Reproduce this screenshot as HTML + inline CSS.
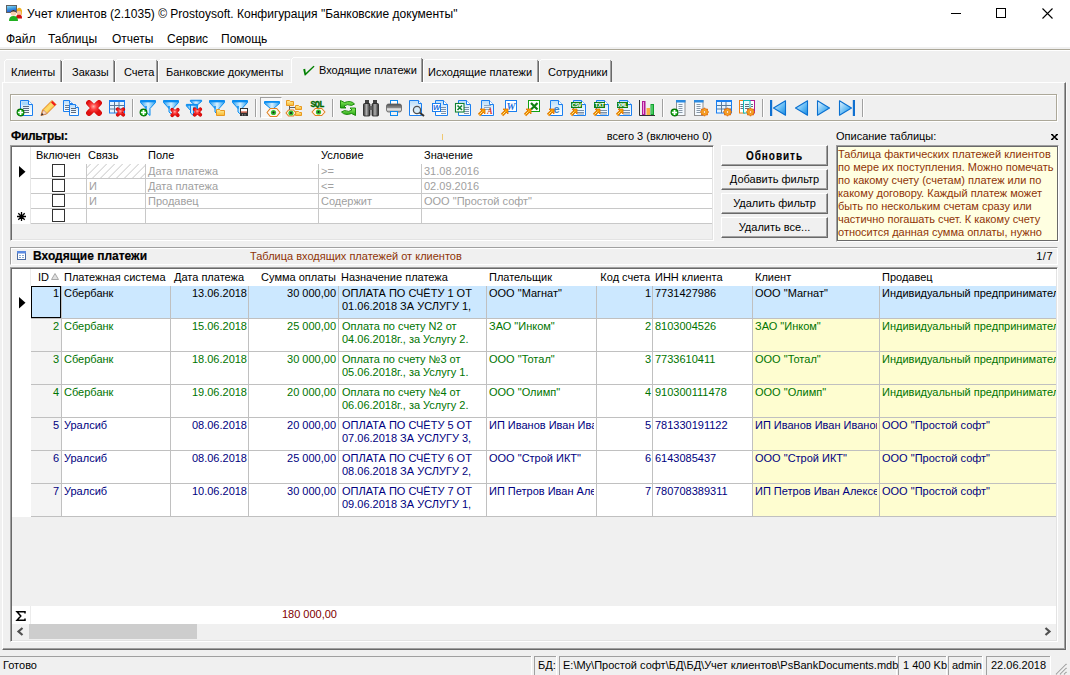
<!DOCTYPE html><html><head><meta charset="utf-8"><title>Учет клиентов</title><style>
*{margin:0;padding:0;box-sizing:border-box}
html,body{width:1070px;height:675px;overflow:hidden;background:#f0f0f0;position:relative;font-family:"Liberation Sans",sans-serif;font-size:11px;color:#000}
.t{position:absolute;white-space:nowrap;line-height:14px}
svg{position:absolute;overflow:visible}
.g{color:#a0a0a0}
.c{position:absolute;white-space:nowrap;line-height:13px;overflow:hidden}
</style></head><body>
<div style="position:absolute;left:0px;top:0px;width:1070px;height:47px;background:#fff"></div>
<div class="t" style="left:27px;top:4px;font-size:12px;line-height:20px">Учет клиентов (2.1035) © Prostoysoft. Конфигурация "Банковские документы"</div>
<svg style="left:6px;top:5px" width="17" height="17" viewBox="0 0 17 17">
<defs><linearGradient id="gScr" x1="0" y1="0" x2="0.3" y2="1"><stop offset="0" stop-color="#a0e0f8"/><stop offset="0.5" stop-color="#40a0e0"/><stop offset="1" stop-color="#2050d0"/></linearGradient></defs>
<rect x="0.5" y="0.5" width="10" height="7" fill="url(#gScr)" stroke="#606060"/>
<path d="M11 4Q13 2 15 3.5Q16.5 5 16 8L15.5 10H11Z" fill="#f0b020"/>
<circle cx="13" cy="8" r="2.3" fill="#f8c0a0"/>
<path d="M10 13Q10 9.5 13 9.8Q16 9.5 16 13V13.5H10Z" fill="#d01010"/>
<circle cx="7.5" cy="8" r="2.8" fill="#f8d0b0"/><path d="M4.6 7.5Q5 5 7.5 5Q10 5 10.4 7.5Q9 6.3 7.5 6.5Q6 6.3 4.6 7.5Z" fill="#202020"/>
<path d="M3 16Q3 11 7.5 11Q12 11 12 16Z" fill="#20b020"/>
</svg>
<div style="position:absolute;left:951px;top:13px;width:10px;height:1px;background:#000"></div>
<div style="position:absolute;left:996px;top:8px;width:10px;height:10px;border:1px solid #000"></div>
<svg style="left:1042px;top:8px" width="11" height="11" viewBox="0 0 11 11"><path d="M0.5 0.5L10.5 10.5M10.5 0.5L0.5 10.5" stroke="#000" stroke-width="1.1"/></svg>
<div class="t" style="left:6px;top:29px;font-size:12px;line-height:20px">Файл</div>
<div class="t" style="left:48px;top:29px;font-size:12px;line-height:20px">Таблицы</div>
<div class="t" style="left:112px;top:29px;font-size:12px;line-height:20px">Отчеты</div>
<div class="t" style="left:167px;top:29px;font-size:12px;line-height:20px">Сервис</div>
<div class="t" style="left:221px;top:29px;font-size:12px;line-height:20px">Помощь</div>
<div style="position:absolute;left:0px;top:49px;width:1070px;height:1px;background:#aca899"></div>
<div style="position:absolute;left:0px;top:50px;width:1070px;height:1px;background:#fff"></div>
<div style="position:absolute;left:6px;top:59px;width:54px;height:1px;background:#fff"></div>
<div style="position:absolute;left:4px;top:61px;width:1px;height:21px;background:#fff"></div>
<div style="position:absolute;left:5px;top:60px;width:1px;height:1px;background:#fff"></div>
<div style="position:absolute;left:60px;top:60px;width:1px;height:22px;background:#a0a0a0"></div>
<div style="position:absolute;left:61px;top:61px;width:1px;height:21px;background:#696969"></div>
<div style="position:absolute;left:64px;top:59px;width:49px;height:1px;background:#fff"></div>
<div style="position:absolute;left:62px;top:61px;width:1px;height:21px;background:#fff"></div>
<div style="position:absolute;left:63px;top:60px;width:1px;height:1px;background:#fff"></div>
<div style="position:absolute;left:113px;top:60px;width:1px;height:22px;background:#a0a0a0"></div>
<div style="position:absolute;left:114px;top:61px;width:1px;height:21px;background:#696969"></div>
<div style="position:absolute;left:117px;top:59px;width:39px;height:1px;background:#fff"></div>
<div style="position:absolute;left:115px;top:61px;width:1px;height:21px;background:#fff"></div>
<div style="position:absolute;left:116px;top:60px;width:1px;height:1px;background:#fff"></div>
<div style="position:absolute;left:156px;top:60px;width:1px;height:22px;background:#a0a0a0"></div>
<div style="position:absolute;left:157px;top:61px;width:1px;height:21px;background:#696969"></div>
<div style="position:absolute;left:160px;top:59px;width:130px;height:1px;background:#fff"></div>
<div style="position:absolute;left:158px;top:61px;width:1px;height:21px;background:#fff"></div>
<div style="position:absolute;left:159px;top:60px;width:1px;height:1px;background:#fff"></div>
<div style="position:absolute;left:425px;top:59px;width:112px;height:1px;background:#fff"></div>
<div style="position:absolute;left:423px;top:61px;width:1px;height:21px;background:#fff"></div>
<div style="position:absolute;left:424px;top:60px;width:1px;height:1px;background:#fff"></div>
<div style="position:absolute;left:537px;top:60px;width:1px;height:22px;background:#a0a0a0"></div>
<div style="position:absolute;left:538px;top:61px;width:1px;height:21px;background:#696969"></div>
<div style="position:absolute;left:541px;top:59px;width:69px;height:1px;background:#fff"></div>
<div style="position:absolute;left:539px;top:61px;width:1px;height:21px;background:#fff"></div>
<div style="position:absolute;left:540px;top:60px;width:1px;height:1px;background:#fff"></div>
<div style="position:absolute;left:610px;top:60px;width:1px;height:22px;background:#a0a0a0"></div>
<div style="position:absolute;left:611px;top:61px;width:1px;height:21px;background:#696969"></div>
<div class="t" style="left:11px;top:65px;">Клиенты</div>
<div class="t" style="left:72px;top:65px;">Заказы</div>
<div class="t" style="left:124px;top:65px;">Счета</div>
<div class="t" style="left:166px;top:65px;">Банковские документы</div>
<div style="position:absolute;left:291px;top:58px;width:131px;height:25px;background:#f0f0f0"></div>
<div style="position:absolute;left:293px;top:57px;width:128px;height:1px;background:#fff"></div>
<div style="position:absolute;left:291px;top:59px;width:1px;height:23px;background:#fff"></div>
<div style="position:absolute;left:292px;top:58px;width:1px;height:1px;background:#fff"></div>
<div style="position:absolute;left:421px;top:58px;width:1px;height:24px;background:#a0a0a0"></div>
<div style="position:absolute;left:422px;top:59px;width:1px;height:23px;background:#696969"></div>
<svg style="left:302px;top:65px" width="14" height="12" viewBox="0 0 14 12"><path d="M1.2 4.2L3.2 3.8L3.8 8L11.5 0.8L12.6 1.6L3.4 10.6L2.6 10.6Z" fill="#008000"/></svg>
<div class="t" style="left:319px;top:63px;">Входящие платежи</div>
<div class="t" style="left:428px;top:65px;">Исходящие платежи</div>
<div class="t" style="left:548px;top:65px;">Сотрудники</div>
<div style="position:absolute;left:2px;top:82px;width:1064px;height:568px;border-top:1px solid #fff;border-left:1px solid #fff;border-right:1px solid #696969;border-bottom:1px solid #696969;box-shadow:inset -1px -1px 0 #a0a0a0"></div>
<div style="position:absolute;left:1066px;top:82px;width:1px;height:568px;background:#fafafa"></div>
<div style="position:absolute;left:292px;top:82px;width:129px;height:1px;background:#f0f0f0"></div>
<div style="position:absolute;left:10px;top:94px;width:1047px;height:27px;border-top:1px solid #aca899;border-left:1px solid #aca899;border-right:1px solid #aca899;border-bottom:1px solid #aca899;box-shadow:1px 1px 0 #fff, inset 1px 1px 0 #fff"></div>
<div style="position:absolute;left:132px;top:99px;width:1px;height:18px;background:#a0a0a0;box-shadow:1px 0 0 #fff"></div>
<div style="position:absolute;left:255px;top:99px;width:1px;height:18px;background:#a0a0a0;box-shadow:1px 0 0 #fff"></div>
<div style="position:absolute;left:332px;top:99px;width:1px;height:18px;background:#a0a0a0;box-shadow:1px 0 0 #fff"></div>
<div style="position:absolute;left:662px;top:99px;width:1px;height:18px;background:#a0a0a0;box-shadow:1px 0 0 #fff"></div>
<div style="position:absolute;left:762px;top:99px;width:1px;height:18px;background:#a0a0a0;box-shadow:1px 0 0 #fff"></div>
<div style="position:absolute;left:862px;top:99px;width:1px;height:18px;background:#a0a0a0;box-shadow:1px 0 0 #fff"></div>
<div style="position:absolute;left:260px;top:97px;width:22px;height:21px;border-top:1px solid #a0a0a0;border-left:1px solid #a0a0a0;border-right:1px solid #fff;border-bottom:1px solid #fff;background:#f7f7f7"></div>
<svg width="0" height="0" style="position:absolute"><defs>
<linearGradient id="gDoc" x1="0" y1="0" x2="0" y2="1"><stop offset="0" stop-color="#b8dcf8"/><stop offset="0.5" stop-color="#e4f2fd"/><stop offset="1" stop-color="#ffffff"/></linearGradient>
<linearGradient id="gFun" x1="0" y1="0" x2="1" y2="0"><stop offset="0" stop-color="#2aa0f0"/><stop offset="0.5" stop-color="#d8f0ff"/><stop offset="1" stop-color="#2aa0f0"/></linearGradient>
<radialGradient id="gRed" cx="0.45" cy="0.35" r="0.7"><stop offset="0" stop-color="#ffb0a8"/><stop offset="0.45" stop-color="#ff4040"/><stop offset="1" stop-color="#e01010"/></radialGradient>
<linearGradient id="gPen" x1="0" y1="0" x2="1" y2="1"><stop offset="0" stop-color="#f08800"/><stop offset="0.5" stop-color="#ffe070"/><stop offset="1" stop-color="#e07800"/></linearGradient>
<linearGradient id="gFold" x1="0" y1="0" x2="0" y2="1"><stop offset="0" stop-color="#fff0a0"/><stop offset="1" stop-color="#f8b830"/></linearGradient>
<linearGradient id="gGreen" x1="0" y1="0" x2="0" y2="1"><stop offset="0" stop-color="#8ef060"/><stop offset="1" stop-color="#20a010"/></linearGradient>
<linearGradient id="gNav" x1="0" y1="0" x2="1" y2="1"><stop offset="0" stop-color="#e8f6ff"/><stop offset="0.6" stop-color="#5cb8f4"/><stop offset="1" stop-color="#1888e0"/></linearGradient>
<linearGradient id="gBin" x1="0" y1="0" x2="1" y2="0"><stop offset="0" stop-color="#303030"/><stop offset="0.45" stop-color="#b0b0b0"/><stop offset="1" stop-color="#282828"/></linearGradient>
<linearGradient id="gPr" x1="0" y1="0" x2="0" y2="1"><stop offset="0" stop-color="#505050"/><stop offset="0.5" stop-color="#909090"/><stop offset="0.6" stop-color="#f0f0f0"/><stop offset="1" stop-color="#a0a0a0"/></linearGradient>
</defs></svg>
<svg style="left:17px;top:100px" width="16" height="16" viewBox="0 0 16 16"><path d="M3.5 0.5H11.5L15.5 4.5V15.5H3.5Z" fill="url(#gDoc)" stroke="#1a7ff0"/><path d="M11.5 0.5V4.5H15.5" fill="#fff" stroke="#1a7ff0"/><rect x="5" y="2" width="6" height="3" fill="#a8d8fa"/><path d="M6 6.5H12" stroke="#5a6a80" stroke-width="1"/><path d="M6 8.5H12" stroke="#5a6a80" stroke-width="1"/><path d="M6 10.5H12" stroke="#5a6a80" stroke-width="1"/><path d="M6 12.5H12" stroke="#5a6a80" stroke-width="1"/><circle cx="3.5" cy="12.5" r="3.4" fill="#18b818" stroke="#007000" stroke-width="1.1"/><path d="M0.8999999999999999 12.5H6.1M3.5 9.9V15.1" stroke="#fff" stroke-width="1.7"/></svg>
<svg style="left:40px;top:100px" width="16" height="16" viewBox="0 0 16 16"><path d="M1 15.5L2.5 10L12 0.5L16 4.5L6.5 14Z" fill="url(#gPen)" stroke="#e07000" stroke-width="0.8"/><path d="M12.5 1L16 4.5L14.5 6L11 2.5Z" fill="#f01818"/><path d="M1 15.5L3.5 10L7 13.5Z" fill="#f8d8c8" stroke="#b07060" stroke-width="0.6"/><path d="M1 15.5L2 13L3.5 14.5Z" fill="#222"/></svg>
<svg style="left:63px;top:100px" width="16" height="16" viewBox="0 0 16 16"><path d="M0.5 0.5H6.5L9.5 3.5V11.5H0.5Z" fill="url(#gDoc)" stroke="#1a7ff0"/><path d="M6.5 0.5V3.5H9.5" fill="#fff" stroke="#1a7ff0"/><path d="M2 5.5H6" stroke="#6a7a90" stroke-width="1"/><path d="M2 7.5H6" stroke="#6a7a90" stroke-width="1"/><path d="M2 9.5H6" stroke="#6a7a90" stroke-width="1"/><path d="M6.5 4.5H12.5L15.5 7.5V15.5H6.5Z" fill="url(#gDoc)" stroke="#1a7ff0"/><path d="M12.5 4.5V7.5H15.5" fill="#fff" stroke="#1a7ff0"/><path d="M8 8.5H13" stroke="#5a6a80" stroke-width="1"/><path d="M8 10.5H13" stroke="#5a6a80" stroke-width="1"/><path d="M8 12.5H13" stroke="#5a6a80" stroke-width="1"/></svg>
<svg style="left:86px;top:100px" width="16" height="16" viewBox="0 0 16 16"><path d="M3 3L13 13M13 3L3 13" stroke="#d00000" stroke-width="5.75" stroke-linecap="round"/><path d="M3 3L13 13M13 3L3 13" stroke="url(#gRed)" stroke-width="4.75" stroke-linecap="round"/></svg>
<svg style="left:109px;top:100px" width="16" height="16" viewBox="0 0 16 16"><rect x="0.5" y="0.5" width="15" height="12.5" fill="#e6f4ff" stroke="#1a7ff0"/><rect x="0" y="0" width="16" height="2" fill="#1a7ff0"/><path d="M1 5.5H15M1 9H15M5.5 2V13M10 2V13" stroke="#5a7a9a" stroke-width="1"/><path d="M8.7 9.2L14.3 14.8M14.3 9.2L8.7 14.8" stroke="#d00000" stroke-width="3.6599999999999997" stroke-linecap="round"/><path d="M8.7 9.2L14.3 14.8M14.3 9.2L8.7 14.8" stroke="url(#gRed)" stroke-width="2.6599999999999997" stroke-linecap="round"/></svg>
<svg style="left:140px;top:100px" width="16" height="16" viewBox="0 0 16 16"><path d="M0.50 0.50H15.50V2.50L10.00 8.50V10.00 15.50L6.00 12.00V6.00 8.50L0.50 2.50Z" fill="url(#gFun)" stroke="#0a8cf0" stroke-width="1"/><path d="M1.00 1.50H15.00" stroke="#0a8cf0" stroke-width="1.60"/><circle cx="3.5" cy="12.5" r="3.4" fill="#18b818" stroke="#007000" stroke-width="1.1"/><path d="M0.8999999999999999 12.5H6.1M3.5 9.9V15.1" stroke="#fff" stroke-width="1.7"/></svg>
<svg style="left:163px;top:100px" width="16" height="16" viewBox="0 0 16 16"><path d="M0.50 0.50H15.50V2.50L10.00 8.50V10.00 15.50L6.00 12.00V6.00 8.50L0.50 2.50Z" fill="url(#gFun)" stroke="#0a8cf0" stroke-width="1"/><path d="M1.00 1.50H15.00" stroke="#0a8cf0" stroke-width="1.60"/><path d="M9.2 9.7L14.8 15.3M14.8 9.7L9.2 15.3" stroke="#d00000" stroke-width="3.6599999999999997" stroke-linecap="round"/><path d="M9.2 9.7L14.8 15.3M14.8 9.7L9.2 15.3" stroke="url(#gRed)" stroke-width="2.6599999999999997" stroke-linecap="round"/></svg>
<svg style="left:186px;top:100px" width="16" height="16" viewBox="0 0 16 16"><path d="M4.38 0.28H15.62V1.41L11.50 4.78V11.50 8.72L8.50 6.75V8.50 4.78L4.38 1.41Z" fill="url(#gFun)" stroke="#0a8cf0" stroke-width="1"/><path d="M4.75 0.84H15.25" stroke="#0a8cf0" stroke-width="0.90"/><path d="M0.38 4.38H11.62V5.88L7.50 10.38V7.50 15.62L4.50 13.00V4.50 10.38L0.38 5.88Z" fill="url(#gFun)" stroke="#0a8cf0" stroke-width="1"/><path d="M0.75 5.12H11.25" stroke="#0a8cf0" stroke-width="1.20"/><path d="M8.7 9.2L14.3 14.8M14.3 9.2L8.7 14.8" stroke="#d00000" stroke-width="3.6599999999999997" stroke-linecap="round"/><path d="M8.7 9.2L14.3 14.8M14.3 9.2L8.7 14.8" stroke="url(#gRed)" stroke-width="2.6599999999999997" stroke-linecap="round"/></svg>
<svg style="left:209px;top:100px" width="16" height="16" viewBox="0 0 16 16"><path d="M0.50 0.50H15.50V2.50L10.00 8.50V10.00 15.50L6.00 12.00V6.00 8.50L0.50 2.50Z" fill="url(#gFun)" stroke="#0a8cf0" stroke-width="1"/><path d="M1.00 1.50H15.00" stroke="#0a8cf0" stroke-width="1.60"/><path d="M7.5 9.5H10.5L11.5 10.5H15.5V15.5H7.5Z" fill="url(#gFold)" stroke="#e89820" stroke-width="1"/></svg>
<svg style="left:232px;top:100px" width="16" height="16" viewBox="0 0 16 16"><path d="M0.50 0.50H15.50V2.50L10.00 8.50V10.00 15.50L6.00 12.00V6.00 8.50L0.50 2.50Z" fill="url(#gFun)" stroke="#0a8cf0" stroke-width="1"/><path d="M1.00 1.50H15.00" stroke="#0a8cf0" stroke-width="1.60"/><rect x="8" y="8" width="8" height="8" fill="#303030"/><rect x="9" y="9" width="6" height="3.5" fill="#fff"/><rect x="9" y="11.5" width="6" height="1" fill="#d03010"/><rect x="10" y="14" width="1" height="1.5" fill="#888"/><rect x="12.5" y="14" width="1" height="1.5" fill="#888"/></svg>
<svg style="left:264px;top:100px" width="16" height="16" viewBox="0 0 16 16"><path d="M0.5 1.5H15.5V3.5L9.5 8.5H6.5L0.5 3.5Z" fill="url(#gFun)" stroke="#0a8cf0"/><path d="M1 2H15" stroke="#0a8cf0" stroke-width="1.6"/><path d="M3.0 12.5L6.25 8.5H12.75L16.0 12.5L12.75 16.5H6.25Z" fill="#fff6ec" stroke="#e08020" stroke-width="1.1" stroke-linejoin="round"/><circle cx="9.5" cy="12.5" r="2.6" fill="#30c030"/><circle cx="9.5" cy="12.5" r="1.1" fill="#202020"/></svg>
<svg style="left:286px;top:100px" width="16" height="16" viewBox="0 0 16 16"><path d="M0.5 0.5H3.5L4.5 1.5H7.5V5.5H0.5Z" fill="url(#gFold)" stroke="#e89820" stroke-width="1"/><path d="M9.5 5.5H12.5L13.5 6.5H15.5V9.5H9.5Z" fill="url(#gFold)" stroke="#e89820" stroke-width="1"/><path d="M9.5 11.5H12.5L13.5 12.5H15.5V15.5H9.5Z" fill="url(#gFold)" stroke="#e89820" stroke-width="1"/><path d="M3.5 6V10M3.5 7.5H9" stroke="#606060" stroke-width="1"/><path d="M0.0 13L2.5 10.0H7.5L10.0 13L7.5 16.0H2.5Z" fill="#fff6ec" stroke="#e08020" stroke-width="1.1" stroke-linejoin="round"/><circle cx="5" cy="13" r="2.6" fill="#30c030"/><circle cx="5" cy="13" r="1.1" fill="#202020"/></svg>
<svg style="left:309px;top:100px" width="16" height="16" viewBox="0 0 16 16"><text x="8" y="7" font-family="Liberation Mono" font-weight="bold" font-size="8.5" fill="#006800" stroke="#006800" stroke-width="0.35" text-anchor="middle" letter-spacing="-0.8">SQL</text><path d="M3.0 12L6.25 8.5H12.75L16.0 12L12.75 15.5H6.25Z" fill="#fff6ec" stroke="#e08020" stroke-width="1.1" stroke-linejoin="round"/><circle cx="9.5" cy="12" r="2.6" fill="#30c030"/><circle cx="9.5" cy="12" r="1.1" fill="#202020"/></svg>
<svg style="left:340px;top:100px" width="16" height="16" viewBox="0 0 16 16"><path d="M0 0L6 6.5L4.2 7.5Q7 4 12 5.5Q10 2.5 5 3Z" fill="none"/><path d="M0.5 0.5L0.5 8L6 8L4 6Q7 3.5 11.5 5.5L14.5 4Q11 0 4.5 2.5Z" fill="url(#gGreen)" stroke="#108000" stroke-width="0.9" stroke-linejoin="round"/><path d="M15.5 15.5L15.5 8L10 8L12 10Q9 12.5 4.5 10.5L1.5 12Q5 16 11.5 13.5Z" fill="url(#gGreen)" stroke="#108000" stroke-width="0.9" stroke-linejoin="round"/></svg>
<svg style="left:363px;top:100px" width="16" height="16" viewBox="0 0 16 16"><rect x="2" y="0" width="4" height="4" fill="#404040"/><rect x="10" y="0" width="4" height="4" fill="#404040"/><rect x="0.5" y="3.5" width="6.5" height="12.5" rx="1" fill="url(#gBin)" stroke="#202020" stroke-width="0.8"/><rect x="9" y="3.5" width="6.5" height="12.5" rx="1" fill="url(#gBin)" stroke="#202020" stroke-width="0.8"/><rect x="6.5" y="6" width="3" height="4" fill="#606060"/></svg>
<svg style="left:386px;top:100px" width="16" height="16" viewBox="0 0 16 16"><rect x="4.5" y="0.5" width="7" height="5" fill="#fff" stroke="#0a88f0"/><rect x="0.5" y="4" width="15" height="8" rx="2" fill="url(#gPr)" stroke="#606060" stroke-width="0.8"/><rect x="4.5" y="11.5" width="7" height="4" fill="#f0f0f0" stroke="#0a88f0"/></svg>
<svg style="left:409px;top:100px" width="16" height="16" viewBox="0 0 16 16"><path d="M0.5 0.5H9.5L12.5 3.5V15.5H0.5Z" fill="url(#gDoc)" stroke="#1a7ff0"/><path d="M9.5 0.5V3.5H12.5" fill="#fff" stroke="#1a7ff0"/><circle cx="8" cy="10" r="3.6" fill="#d8ecf8" stroke="#505050" stroke-width="1.3"/><path d="M10.8 12.8L15 16" stroke="#303030" stroke-width="2"/></svg>
<svg style="left:432px;top:100px" width="16" height="16" viewBox="0 0 16 16"><path d="M3.5 0.5H11.5L15.5 4.5V15.5H3.5Z" fill="url(#gDoc)" stroke="#1a7ff0"/><path d="M11.5 0.5V4.5H15.5" fill="#fff" stroke="#1a7ff0"/><path d="M9 7.5H14" stroke="#7a90a8" stroke-width="1"/><path d="M9 9.5H14" stroke="#7a90a8" stroke-width="1"/><path d="M9 11.5H14" stroke="#7a90a8" stroke-width="1"/><path d="M9 13.5H14" stroke="#7a90a8" stroke-width="1"/><rect x="0.5" y="3.5" width="8" height="8" fill="#fff" stroke="#1a7ff0"/><text x="4.6" y="10.3" font-family="Liberation Sans" font-weight="bold" font-style="italic" font-size="7.5" fill="#1a6ee0" text-anchor="middle">W</text></svg>
<svg style="left:455px;top:100px" width="16" height="16" viewBox="0 0 16 16"><path d="M3.5 0.5H11.5L15.5 4.5V15.5H3.5Z" fill="url(#gDoc)" stroke="#1a7ff0"/><path d="M11.5 0.5V4.5H15.5" fill="#fff" stroke="#1a7ff0"/><path d="M9 7.5H14" stroke="#7a90a8" stroke-width="1"/><path d="M9 9.5H14" stroke="#7a90a8" stroke-width="1"/><path d="M9 11.5H14" stroke="#7a90a8" stroke-width="1"/><path d="M9 13.5H14" stroke="#7a90a8" stroke-width="1"/><rect x="0.5" y="3.5" width="8.5" height="8.5" fill="#fff" stroke="#108030" stroke-width="1.1"/><path d="M2.5 5.5L7 10M7 5.5L2.5 10" stroke="#108030" stroke-width="1.6"/></svg>
<svg style="left:478px;top:100px" width="16" height="16" viewBox="0 0 16 16"><path d="M3.5 0.5H11.5L15.5 4.5V15.5H3.5Z" fill="url(#gDoc)" stroke="#1a7ff0"/><path d="M11.5 0.5V4.5H15.5" fill="#fff" stroke="#1a7ff0"/><path d="M6 5.5H13" stroke="#90a8c0" stroke-width="1"/><path d="M6 7.5H13" stroke="#90a8c0" stroke-width="1"/><path d="M6 9.5H13" stroke="#90a8c0" stroke-width="1"/><text x="12" y="14" font-family="Liberation Serif" font-style="italic" font-weight="bold" font-size="8" fill="#e03010" text-anchor="middle">A</text><path d="M1 15L5 11" stroke="#e88000" stroke-width="3.2"/><path d="M2 9H7V14Z" fill="#f8a000" stroke="#e07000" stroke-width="0.8"/><path d="M1.5 14.5L4.5 11.5" stroke="#fff080" stroke-width="1"/></svg>
<svg style="left:501px;top:100px" width="16" height="16" viewBox="0 0 16 16"><rect x="4.5" y="0.5" width="11" height="11" fill="#fff" stroke="#1a7ff0"/><text x="10" y="9.5" font-family="Liberation Serif" font-weight="bold" font-style="italic" font-size="10" fill="#1a6ee0" text-anchor="middle">W</text><path d="M1 15L5 11" stroke="#e88000" stroke-width="3.2"/><path d="M2 9H7V14Z" fill="#f8a000" stroke="#e07000" stroke-width="0.8"/><path d="M1.5 14.5L4.5 11.5" stroke="#fff080" stroke-width="1"/></svg>
<svg style="left:524px;top:100px" width="16" height="16" viewBox="0 0 16 16"><rect x="4.5" y="0.5" width="11" height="11" fill="#fff" stroke="#10a010"/><path d="M7 3L13.5 9.5M13.5 3L7 9.5" stroke="#108010" stroke-width="2.2"/><path d="M1 15L5 11" stroke="#e88000" stroke-width="3.2"/><path d="M2 9H7V14Z" fill="#f8a000" stroke="#e07000" stroke-width="0.8"/><path d="M1.5 14.5L4.5 11.5" stroke="#fff080" stroke-width="1"/></svg>
<svg style="left:547px;top:100px" width="16" height="16" viewBox="0 0 16 16"><path d="M3.5 0.5H11.5L15.5 4.5V15.5H3.5Z" fill="url(#gDoc)" stroke="#1a7ff0"/><path d="M11.5 0.5V4.5H15.5" fill="#fff" stroke="#1a7ff0"/><text x="9.5" y="12.5" font-family="Liberation Sans" font-weight="bold" font-size="11" fill="#3880c8" text-anchor="middle">e</text><path d="M1 15L5 11" stroke="#e88000" stroke-width="3.2"/><path d="M2 9H7V14Z" fill="#f8a000" stroke="#e07000" stroke-width="0.8"/><path d="M1.5 14.5L4.5 11.5" stroke="#fff080" stroke-width="1"/></svg>
<svg style="left:570px;top:100px" width="16" height="16" viewBox="0 0 16 16"><path d="M3.5 0.5H11.5L15.5 4.5V15.5H3.5Z" fill="url(#gDoc)" stroke="#1a7ff0"/><path d="M11.5 0.5V4.5H15.5" fill="#fff" stroke="#1a7ff0"/><path d="M7 10.5H14" stroke="#7a90a8" stroke-width="1"/><path d="M7 12.5H14" stroke="#7a90a8" stroke-width="1"/><path d="M7 14H14" stroke="#7a90a8" stroke-width="1"/><rect x="1" y="2" width="11" height="6" fill="#108010"/><text x="6.5" y="7.3" font-family="Liberation Mono" font-weight="bold" font-size="6" fill="#fff" text-anchor="middle" letter-spacing="-0.4">CSV</text><path d="M1 15L5 11" stroke="#e88000" stroke-width="3.2"/><path d="M2 9H7V14Z" fill="#f8a000" stroke="#e07000" stroke-width="0.8"/><path d="M1.5 14.5L4.5 11.5" stroke="#fff080" stroke-width="1"/></svg>
<svg style="left:593px;top:100px" width="16" height="16" viewBox="0 0 16 16"><path d="M3.5 0.5H11.5L15.5 4.5V15.5H3.5Z" fill="url(#gDoc)" stroke="#1a7ff0"/><path d="M11.5 0.5V4.5H15.5" fill="#fff" stroke="#1a7ff0"/><path d="M7 10.5H14" stroke="#7a90a8" stroke-width="1"/><path d="M7 12.5H14" stroke="#7a90a8" stroke-width="1"/><path d="M7 14H14" stroke="#7a90a8" stroke-width="1"/><rect x="1" y="2" width="11" height="6" fill="#108010"/><text x="6.5" y="7.3" font-family="Liberation Mono" font-weight="bold" font-size="6" fill="#fff" text-anchor="middle" letter-spacing="-0.4">TXT</text><path d="M1 15L5 11" stroke="#e88000" stroke-width="3.2"/><path d="M2 9H7V14Z" fill="#f8a000" stroke="#e07000" stroke-width="0.8"/><path d="M1.5 14.5L4.5 11.5" stroke="#fff080" stroke-width="1"/></svg>
<svg style="left:616px;top:100px" width="16" height="16" viewBox="0 0 16 16"><path d="M3.5 0.5H11.5L15.5 4.5V15.5H3.5Z" fill="url(#gDoc)" stroke="#1a7ff0"/><path d="M11.5 0.5V4.5H15.5" fill="#fff" stroke="#1a7ff0"/><path d="M7 10.5H14" stroke="#7a90a8" stroke-width="1"/><path d="M7 12.5H14" stroke="#7a90a8" stroke-width="1"/><path d="M7 14H14" stroke="#7a90a8" stroke-width="1"/><rect x="1" y="2" width="11" height="6" fill="#108010"/><text x="6.5" y="7.3" font-family="Liberation Mono" font-weight="bold" font-size="6" fill="#fff" text-anchor="middle" letter-spacing="-0.4">XML</text><path d="M1 15L5 11" stroke="#e88000" stroke-width="3.2"/><path d="M2 9H7V14Z" fill="#f8a000" stroke="#e07000" stroke-width="0.8"/><path d="M1.5 14.5L4.5 11.5" stroke="#fff080" stroke-width="1"/></svg>
<svg style="left:639px;top:100px" width="16" height="16" viewBox="0 0 16 16"><path d="M0.5 0V15.5H16" stroke="#303030" fill="none"/><rect x="3" y="1" width="3.5" height="14" fill="#b01898"/><rect x="4" y="2" width="1" height="12" fill="#f0a0e0"/><rect x="7.5" y="8" width="3.5" height="7" fill="#f8b040"/><rect x="11.5" y="4" width="3.5" height="11" fill="#10a030"/><rect x="12.5" y="5" width="1" height="9" fill="#80f090"/></svg>
<svg style="left:671px;top:100px" width="16" height="16" viewBox="0 0 16 16"><rect x="5.5" y="0.5" width="8.5" height="15" fill="#f4faff" stroke="#909090"/><rect x="5" y="0" width="9.5" height="2.5" fill="#2a8ae0"/><path d="M7.5 4.5H11.5M7.5 6.5H11.5M7.5 8.5H11.5M7.5 10.5H11.5M7.5 12.5H11.5" stroke="#8898a8"/><circle cx="3.5" cy="12.5" r="3.4" fill="#18b818" stroke="#007000" stroke-width="1.1"/><path d="M0.8999999999999999 12.5H6.1M3.5 9.9V15.1" stroke="#fff" stroke-width="1.7"/></svg>
<svg style="left:694px;top:100px" width="16" height="16" viewBox="0 0 16 16"><rect x="0.5" y="0.5" width="8.5" height="15" fill="#f4faff" stroke="#909090"/><rect x="0" y="0" width="9.5" height="2.5" fill="#2a8ae0"/><path d="M2.5 4.5H6.5M2.5 6.5H6.5M2.5 8.5H6.5M2.5 10.5H6.5M2.5 12.5H6.5" stroke="#8898a8"/><path d="M14.70 12.00L13.27 13.15L13.47 14.97L11.65 14.77L10.50 16.20L9.35 14.77L7.53 14.97L7.73 13.15L6.30 12.00L7.73 10.85L7.53 9.03L9.35 9.23L10.50 7.80L11.65 9.23L13.47 9.03L13.27 10.85Z" fill="#f8a820" stroke="#e06000" stroke-width="0.9"/><circle cx="10.5" cy="12" r="1.3" fill="#fff8e0" stroke="#e06000" stroke-width="0.6"/></svg>
<svg style="left:716px;top:100px" width="16" height="16" viewBox="0 0 16 16"><rect x="0.5" y="0.5" width="15" height="12.5" fill="#e6f4ff" stroke="#1a7ff0"/><rect x="0" y="0" width="16" height="2" fill="#1a7ff0"/><path d="M1 5.5H15M1 9H15M5.5 2V13M10 2V13" stroke="#5a7a9a" stroke-width="1"/><path d="M15.70 12.00L14.27 13.15L14.47 14.97L12.65 14.77L11.50 16.20L10.35 14.77L8.53 14.97L8.73 13.15L7.30 12.00L8.73 10.85L8.53 9.03L10.35 9.23L11.50 7.80L12.65 9.23L14.47 9.03L14.27 10.85Z" fill="#f8a820" stroke="#e06000" stroke-width="0.9"/><circle cx="11.5" cy="12" r="1.3" fill="#fff8e0" stroke="#e06000" stroke-width="0.6"/></svg>
<svg style="left:739px;top:100px" width="16" height="16" viewBox="0 0 16 16"><rect x="0.5" y="0.5" width="5" height="12.5" fill="#fff" stroke="#f08010"/><rect x="10.5" y="0.5" width="5" height="12.5" fill="#fff" stroke="#b01890"/><rect x="4.5" y="0.5" width="6.5" height="12.5" fill="#e8ffff" stroke="#10b8b8"/><path d="M1.5 4.5H4M1.5 6.5H4M1.5 8.5H4M6 4.5H10M6 6.5H10M6 8.5H10M12 4.5H14M12 6.5H14" stroke="#607080"/><path d="M15.70 12.00L14.27 13.15L14.47 14.97L12.65 14.77L11.50 16.20L10.35 14.77L8.53 14.97L8.73 13.15L7.30 12.00L8.73 10.85L8.53 9.03L10.35 9.23L11.50 7.80L12.65 9.23L14.47 9.03L14.27 10.85Z" fill="#f8a820" stroke="#e06000" stroke-width="0.9"/><circle cx="11.5" cy="12" r="1.3" fill="#fff8e0" stroke="#e06000" stroke-width="0.6"/></svg>
<svg style="left:770px;top:100px" width="16" height="16" viewBox="0 0 16 16"><rect x="0" y="0" width="2.2" height="16" fill="#1070d0"/><path d="M15.5 0.8V15.2L3.5 8Z" fill="url(#gNav)" stroke="#0a70d0" stroke-width="1.1" stroke-linejoin="round"/></svg>
<svg style="left:795px;top:100px" width="16" height="16" viewBox="0 0 16 16"><path d="M12.5 0.8V15.2L0.5 8Z" fill="url(#gNav)" stroke="#0a70d0" stroke-width="1.1" stroke-linejoin="round"/></svg>
<svg style="left:817px;top:100px" width="16" height="16" viewBox="0 0 16 16"><path d="M0.5 0.8V15.2L12.5 8Z" fill="url(#gNav)" stroke="#0a70d0" stroke-width="1.1" stroke-linejoin="round"/></svg>
<svg style="left:839px;top:100px" width="16" height="16" viewBox="0 0 16 16"><rect x="13.8" y="0" width="2.2" height="16" fill="#1070d0"/><path d="M0.5 0.8V15.2L12.5 8Z" fill="url(#gNav)" stroke="#0a70d0" stroke-width="1.1" stroke-linejoin="round"/></svg>
<div class="t" style="left:11px;top:129px;font-weight:bold;letter-spacing:-0.3px;font-size:12px;-webkit-text-stroke:0.2px #000">Фильтры:</div>
<div style="position:absolute;left:442px;top:134px;width:1px;height:6px;background:#f0c870"></div>
<div class="t" style="right:358px;top:129px;">всего 3 (включено 0)</div>
<div style="position:absolute;left:10px;top:145px;width:704px;height:96px;border-top:1px solid #a0a0a0;border-left:1px solid #a0a0a0;border-right:1px solid #fff;border-bottom:1px solid #fff;box-shadow:inset 1px 1px 0 #696969, inset -1px -1px 0 #e3e3e3;background:#f0f0f0"></div>
<div style="position:absolute;left:12px;top:147px;width:700px;height:77px;background:#fff"></div>
<div style="position:absolute;left:30px;top:178px;width:682px;height:1px;background:#c8c8c8"></div>
<div style="position:absolute;left:30px;top:193px;width:682px;height:1px;background:#c8c8c8"></div>
<div style="position:absolute;left:30px;top:208px;width:682px;height:1px;background:#c8c8c8"></div>
<div style="position:absolute;left:30px;top:223px;width:682px;height:1px;background:#c8c8c8"></div>
<div style="position:absolute;left:30px;top:147px;width:1px;height:77px;background:#e6e6e6"></div>
<div style="position:absolute;left:86px;top:164px;width:1px;height:60px;background:#c8c8c8"></div>
<div style="position:absolute;left:145px;top:164px;width:1px;height:60px;background:#c8c8c8"></div>
<div style="position:absolute;left:318px;top:164px;width:1px;height:60px;background:#c8c8c8"></div>
<div style="position:absolute;left:421px;top:164px;width:1px;height:60px;background:#c8c8c8"></div>
<div class="t" style="left:36px;top:148px;">Включен</div>
<div class="t" style="left:88px;top:148px;">Связь</div>
<div class="t" style="left:148px;top:148px;">Поле</div>
<div class="t" style="left:321px;top:148px;">Условие</div>
<div class="t" style="left:424px;top:148px;">Значение</div>
<svg style="left:19px;top:166px" width="7" height="12" viewBox="0 0 7 12"><path d="M0 0V11.5L6.5 5.75Z" fill="#000"/></svg>
<svg style="left:17px;top:212px" width="9" height="9" viewBox="0 0 9 9"><path d="M4.5 0V9M0 4.5H9M1.3 1.3L7.7 7.7M7.7 1.3L1.3 7.7" stroke="#000" stroke-width="1.3"/></svg>
<div style="position:absolute;left:52px;top:164px;width:13px;height:13px;border:1px solid #333;background:#fff"></div>
<div style="position:absolute;left:52px;top:179px;width:13px;height:13px;border:1px solid #333;background:#fff"></div>
<div style="position:absolute;left:52px;top:194px;width:13px;height:13px;border:1px solid #333;background:#fff"></div>
<div style="position:absolute;left:52px;top:209px;width:13px;height:13px;border:1px solid #333;background:#fff"></div>
<svg style="left:87px;top:164px" width="58" height="14" viewBox="0 0 58 14"><defs><pattern id="h" width="5.657" height="5.657" patternUnits="userSpaceOnUse" patternTransform="translate(3,0) rotate(45)"><path d="M0 0V5.657" stroke="#a8a8a8" stroke-width="1"/></pattern></defs><rect width="58" height="14" fill="url(#h)"/></svg>
<div class="t" style="left:89px;top:164px;color:#a0a0a0"></div>
<div class="t" style="left:148px;top:164px;color:#a0a0a0">Дата платежа</div>
<div class="t" style="left:321px;top:164px;color:#a0a0a0">&gt;=</div>
<div class="t" style="left:424px;top:164px;color:#a0a0a0">31.08.2016</div>
<div class="t" style="left:89px;top:179px;color:#a0a0a0">И</div>
<div class="t" style="left:148px;top:179px;color:#a0a0a0">Дата платежа</div>
<div class="t" style="left:321px;top:179px;color:#a0a0a0">&lt;=</div>
<div class="t" style="left:424px;top:179px;color:#a0a0a0">02.09.2016</div>
<div class="t" style="left:89px;top:194px;color:#a0a0a0">И</div>
<div class="t" style="left:148px;top:194px;color:#a0a0a0">Продавец</div>
<div class="t" style="left:321px;top:194px;color:#a0a0a0">Содержит</div>
<div class="t" style="left:424px;top:194px;color:#a0a0a0">ООО "Простой софт"</div>
<div style="position:absolute;left:721px;top:145px;width:107px;height:21px;background:#f0f0f0;border-top:1px solid #fff;border-left:1px solid #fff;border-right:1px solid #696969;border-bottom:1px solid #696969;box-shadow:inset -1px -1px 0 #a0a0a0"></div>
<div class="t" style="left:721px;top:146px;width:107px;text-align:center;line-height:20px;font-weight:bold;font-size:12.5px;letter-spacing:1.2px;transform:scaleX(0.8);transform-origin:53.5px 0;-webkit-text-stroke:0.15px #000">Обновить</div>
<div style="position:absolute;left:721px;top:169px;width:107px;height:21px;background:#f0f0f0;border-top:1px solid #fff;border-left:1px solid #fff;border-right:1px solid #696969;border-bottom:1px solid #696969;box-shadow:inset -1px -1px 0 #a0a0a0"></div>
<div class="t" style="left:721px;top:169px;width:107px;text-align:center;line-height:20px">Добавить фильтр</div>
<div style="position:absolute;left:721px;top:193px;width:107px;height:21px;background:#f0f0f0;border-top:1px solid #fff;border-left:1px solid #fff;border-right:1px solid #696969;border-bottom:1px solid #696969;box-shadow:inset -1px -1px 0 #a0a0a0"></div>
<div class="t" style="left:721px;top:193px;width:107px;text-align:center;line-height:20px">Удалить фильтр</div>
<div style="position:absolute;left:721px;top:217px;width:107px;height:21px;background:#f0f0f0;border-top:1px solid #fff;border-left:1px solid #fff;border-right:1px solid #696969;border-bottom:1px solid #696969;box-shadow:inset -1px -1px 0 #a0a0a0"></div>
<div class="t" style="left:721px;top:217px;width:107px;text-align:center;line-height:20px">Удалить все...</div>
<div class="t" style="left:836px;top:129px;">Описание таблицы:</div>
<svg style="left:1051px;top:134px" width="7" height="6" viewBox="0 0 7 6"><path d="M0.8 0.5L6.2 5.5M6.2 0.5L0.8 5.5" stroke="#000" stroke-width="1.6"/><path d="M0 0.5H2.2M4.8 0.5H7M0 5.5H2.2M4.8 5.5H7" stroke="#000" stroke-width="1"/></svg>
<div style="position:absolute;left:836px;top:145px;width:223px;height:97px;background:#ffffe1;border-top:1px solid #a0a0a0;border-left:1px solid #a0a0a0;border-right:1px solid #fff;border-bottom:1px solid #fff;box-shadow:inset 0 0 0 1px #696969"></div>
<div style="position:absolute;left:838px;top:147px;width:218px;height:92px;overflow:hidden;"><div style="position:absolute;left:0;top:1px;white-space:nowrap;line-height:13px;color:#8f3406">Таблица фактических платежей клиентов</div><div style="position:absolute;left:0;top:14px;white-space:nowrap;line-height:13px;color:#8f3406">по мере их поступления. Можно помечать</div><div style="position:absolute;left:0;top:27px;white-space:nowrap;line-height:13px;color:#8f3406">по какому счету (счетам) платеж или по</div><div style="position:absolute;left:0;top:40px;white-space:nowrap;line-height:13px;color:#8f3406">какому договору. Каждый платеж может</div><div style="position:absolute;left:0;top:53px;white-space:nowrap;line-height:13px;color:#8f3406">быть по нескольким счетам сразу или</div><div style="position:absolute;left:0;top:66px;white-space:nowrap;line-height:13px;color:#8f3406">частично погашать счет. К какому счету</div><div style="position:absolute;left:0;top:79px;white-space:nowrap;line-height:13px;color:#8f3406">относится данная сумма оплаты, нужно</div></div>
<div style="position:absolute;left:10px;top:247px;width:1048px;height:18px;border-top:1px solid #a0a0a0;border-left:1px solid #a0a0a0;border-right:1px solid #fff;border-bottom:1px solid #fff;box-shadow:inset 1px 1px 0 #fff"></div>
<svg style="left:17px;top:251px" width="9" height="9" viewBox="0 0 9 9"><rect x="0.5" y="0.5" width="8" height="8" fill="#fff" stroke="#4a6aa0"/><rect x="0" y="0" width="9" height="2.5" fill="#5a8ae0"/><path d="M2 4.5H4M5 4.5H7M2 6.5H4M5 6.5H7" stroke="#8aaad0"/></svg>
<div class="t" style="left:33px;top:249px;font-weight:bold;font-size:12px;-webkit-text-stroke:0.2px #000">Входящие платежи</div>
<div class="t" style="left:250px;top:249px;color:#8f3406">Таблица входящих платежей от клиентов</div>
<div class="t" style="right:17px;top:249px;letter-spacing:0.5px">1/7</div>
<div style="position:absolute;left:10px;top:267px;width:1048px;height:375px;border-top:1px solid #a0a0a0;border-left:1px solid #a0a0a0;border-right:1px solid #fff;border-bottom:1px solid #fff;box-shadow:inset 1px 1px 0 #696969, inset -1px -1px 0 #e3e3e3;background:#f0f0f0"></div>
<div style="position:absolute;left:12px;top:269px;width:1044px;height:248px;background:#fff"></div>
<div class="t" style="left:38px;top:270px;">ID</div>
<div class="t" style="left:64px;top:270px;">Платежная система</div>
<div class="t" style="left:174px;top:270px;">Дата платежа</div>
<div class="t" style="right:734px;top:270px;">Сумма оплаты</div>
<div class="t" style="left:341px;top:270px;">Назначение платежа</div>
<div class="t" style="left:489px;top:270px;">Плательщик</div>
<div class="t" style="right:420px;top:270px;">Код счета</div>
<div class="t" style="left:655px;top:270px;">ИНН клиента</div>
<div class="t" style="left:755px;top:270px;">Клиент</div>
<div class="t" style="left:882px;top:270px;">Продавец</div>
<svg style="left:51px;top:273px" width="8" height="7" viewBox="0 0 8 7"><path d="M4 0.5L7.5 6.5H0.5Z" fill="#e0e0e0" stroke="#a0a0a0" stroke-width="0.9"/></svg>
<div style="position:absolute;left:30px;top:269px;width:1px;height:17px;background:#ececec"></div>
<div style="position:absolute;left:31px;top:286px;width:1025px;height:32px;background:#cce8ff"></div>
<div style="position:absolute;left:31px;top:318px;width:1025px;height:1px;background:#c0c0c0"></div>
<div class="t" style="right:1011px;top:286px;color:#000">1</div>
<div style="position:absolute;left:62px;top:286px;width:106px;height:14px;overflow:hidden;"><div class="t" style="left:2px;top:0;color:#000">Сбербанк</div></div>
<div class="t" style="right:823px;top:286px;color:#000">13.06.2018</div>
<div class="t" style="right:734px;top:286px;color:#000">30 000,00</div>
<div style="position:absolute;left:339px;top:286px;width:147px;height:30px;overflow:hidden;"><div class="t" style="left:3px;top:0;color:#000">ОПЛАТА ПО СЧЁТУ 1 ОТ</div><div class="t" style="left:3px;top:13px;color:#000">01.06.2018 ЗА УСЛУГУ 1,</div></div>
<div style="position:absolute;left:487px;top:286px;width:107px;height:14px;overflow:hidden;"><div class="t" style="left:2px;top:0;color:#000">ООО "Магнат"</div></div>
<div class="t" style="right:419px;top:286px;color:#000">1</div>
<div style="position:absolute;left:653px;top:286px;width:99px;height:14px;overflow:hidden;"><div class="t" style="left:2px;top:0;color:#000">7731427986</div></div>
<div style="position:absolute;left:753px;top:286px;width:124px;height:14px;overflow:hidden;"><div class="t" style="left:2px;top:0;color:#000">ООО "Магнат"</div></div>
<div style="position:absolute;left:880px;top:286px;width:176px;height:14px;overflow:hidden;"><div class="t" style="left:2px;top:0;color:#000">Индивидуальный предприниматель</div></div>
<div style="position:absolute;left:31px;top:319px;width:30px;height:32px;background:#f4f4f4"></div>
<div style="position:absolute;left:753px;top:319px;width:303px;height:32px;background:#fefdd0"></div>
<div style="position:absolute;left:31px;top:351px;width:1025px;height:1px;background:#c0c0c0"></div>
<div class="t" style="right:1011px;top:319px;color:#007400">2</div>
<div style="position:absolute;left:62px;top:319px;width:106px;height:14px;overflow:hidden;"><div class="t" style="left:2px;top:0;color:#007400">Сбербанк</div></div>
<div class="t" style="right:823px;top:319px;color:#007400">15.06.2018</div>
<div class="t" style="right:734px;top:319px;color:#007400">25 000,00</div>
<div style="position:absolute;left:339px;top:319px;width:147px;height:30px;overflow:hidden;"><div class="t" style="left:3px;top:0;color:#007400">Оплата по счету N2 от</div><div class="t" style="left:3px;top:13px;color:#007400">04.06.2018г., за Услугу 2.</div></div>
<div style="position:absolute;left:487px;top:319px;width:107px;height:14px;overflow:hidden;"><div class="t" style="left:2px;top:0;color:#007400">ЗАО "Инком"</div></div>
<div class="t" style="right:419px;top:319px;color:#007400">2</div>
<div style="position:absolute;left:653px;top:319px;width:99px;height:14px;overflow:hidden;"><div class="t" style="left:2px;top:0;color:#007400">8103004526</div></div>
<div style="position:absolute;left:753px;top:319px;width:124px;height:14px;overflow:hidden;"><div class="t" style="left:2px;top:0;color:#007400">ЗАО "Инком"</div></div>
<div style="position:absolute;left:880px;top:319px;width:176px;height:14px;overflow:hidden;"><div class="t" style="left:2px;top:0;color:#007400">Индивидуальный предприниматель</div></div>
<div style="position:absolute;left:31px;top:352px;width:30px;height:32px;background:#f4f4f4"></div>
<div style="position:absolute;left:753px;top:352px;width:303px;height:32px;background:#fefdd0"></div>
<div style="position:absolute;left:31px;top:384px;width:1025px;height:1px;background:#c0c0c0"></div>
<div class="t" style="right:1011px;top:352px;color:#007400">3</div>
<div style="position:absolute;left:62px;top:352px;width:106px;height:14px;overflow:hidden;"><div class="t" style="left:2px;top:0;color:#007400">Сбербанк</div></div>
<div class="t" style="right:823px;top:352px;color:#007400">18.06.2018</div>
<div class="t" style="right:734px;top:352px;color:#007400">30 000,00</div>
<div style="position:absolute;left:339px;top:352px;width:147px;height:30px;overflow:hidden;"><div class="t" style="left:3px;top:0;color:#007400">Оплата по счету №3 от</div><div class="t" style="left:3px;top:13px;color:#007400">05.06.2018г., за Услугу 1.</div></div>
<div style="position:absolute;left:487px;top:352px;width:107px;height:14px;overflow:hidden;"><div class="t" style="left:2px;top:0;color:#007400">ООО "Тотал"</div></div>
<div class="t" style="right:419px;top:352px;color:#007400">3</div>
<div style="position:absolute;left:653px;top:352px;width:99px;height:14px;overflow:hidden;"><div class="t" style="left:2px;top:0;color:#007400">7733610411</div></div>
<div style="position:absolute;left:753px;top:352px;width:124px;height:14px;overflow:hidden;"><div class="t" style="left:2px;top:0;color:#007400">ООО "Тотал"</div></div>
<div style="position:absolute;left:880px;top:352px;width:176px;height:14px;overflow:hidden;"><div class="t" style="left:2px;top:0;color:#007400">Индивидуальный предприниматель</div></div>
<div style="position:absolute;left:31px;top:385px;width:30px;height:32px;background:#f4f4f4"></div>
<div style="position:absolute;left:753px;top:385px;width:303px;height:32px;background:#fefdd0"></div>
<div style="position:absolute;left:31px;top:417px;width:1025px;height:1px;background:#c0c0c0"></div>
<div class="t" style="right:1011px;top:385px;color:#007400">4</div>
<div style="position:absolute;left:62px;top:385px;width:106px;height:14px;overflow:hidden;"><div class="t" style="left:2px;top:0;color:#007400">Сбербанк</div></div>
<div class="t" style="right:823px;top:385px;color:#007400">19.06.2018</div>
<div class="t" style="right:734px;top:385px;color:#007400">20 000,00</div>
<div style="position:absolute;left:339px;top:385px;width:147px;height:30px;overflow:hidden;"><div class="t" style="left:3px;top:0;color:#007400">Оплата по счету №4 от</div><div class="t" style="left:3px;top:13px;color:#007400">06.06.2018г., за Услугу 2.</div></div>
<div style="position:absolute;left:487px;top:385px;width:107px;height:14px;overflow:hidden;"><div class="t" style="left:2px;top:0;color:#007400">ООО "Олимп"</div></div>
<div class="t" style="right:419px;top:385px;color:#007400">4</div>
<div style="position:absolute;left:653px;top:385px;width:99px;height:14px;overflow:hidden;"><div class="t" style="left:2px;top:0;color:#007400">910300111478</div></div>
<div style="position:absolute;left:753px;top:385px;width:124px;height:14px;overflow:hidden;"><div class="t" style="left:2px;top:0;color:#007400">ООО "Олимп"</div></div>
<div style="position:absolute;left:880px;top:385px;width:176px;height:14px;overflow:hidden;"><div class="t" style="left:2px;top:0;color:#007400">Индивидуальный предприниматель</div></div>
<div style="position:absolute;left:31px;top:418px;width:30px;height:32px;background:#f4f4f4"></div>
<div style="position:absolute;left:753px;top:418px;width:303px;height:32px;background:#fefdd0"></div>
<div style="position:absolute;left:31px;top:450px;width:1025px;height:1px;background:#c0c0c0"></div>
<div class="t" style="right:1011px;top:418px;color:#000080">5</div>
<div style="position:absolute;left:62px;top:418px;width:106px;height:14px;overflow:hidden;"><div class="t" style="left:2px;top:0;color:#000080">Уралсиб</div></div>
<div class="t" style="right:823px;top:418px;color:#000080">08.06.2018</div>
<div class="t" style="right:734px;top:418px;color:#000080">20 000,00</div>
<div style="position:absolute;left:339px;top:418px;width:147px;height:30px;overflow:hidden;"><div class="t" style="left:3px;top:0;color:#000080">ОПЛАТА ПО СЧЁТУ 5 ОТ</div><div class="t" style="left:3px;top:13px;color:#000080">07.06.2018 ЗА УСЛУГУ 3,</div></div>
<div style="position:absolute;left:487px;top:418px;width:107px;height:14px;overflow:hidden;"><div class="t" style="left:2px;top:0;color:#000080">ИП Иванов Иван Иванович</div></div>
<div class="t" style="right:419px;top:418px;color:#000080">5</div>
<div style="position:absolute;left:653px;top:418px;width:99px;height:14px;overflow:hidden;"><div class="t" style="left:2px;top:0;color:#000080">781330191122</div></div>
<div style="position:absolute;left:753px;top:418px;width:124px;height:14px;overflow:hidden;"><div class="t" style="left:2px;top:0;color:#000080">ИП Иванов Иван Иванович</div></div>
<div style="position:absolute;left:880px;top:418px;width:176px;height:14px;overflow:hidden;"><div class="t" style="left:2px;top:0;color:#000080">ООО "Простой софт"</div></div>
<div style="position:absolute;left:31px;top:451px;width:30px;height:32px;background:#f4f4f4"></div>
<div style="position:absolute;left:753px;top:451px;width:303px;height:32px;background:#fefdd0"></div>
<div style="position:absolute;left:31px;top:483px;width:1025px;height:1px;background:#c0c0c0"></div>
<div class="t" style="right:1011px;top:451px;color:#000080">6</div>
<div style="position:absolute;left:62px;top:451px;width:106px;height:14px;overflow:hidden;"><div class="t" style="left:2px;top:0;color:#000080">Уралсиб</div></div>
<div class="t" style="right:823px;top:451px;color:#000080">08.06.2018</div>
<div class="t" style="right:734px;top:451px;color:#000080">25 000,00</div>
<div style="position:absolute;left:339px;top:451px;width:147px;height:30px;overflow:hidden;"><div class="t" style="left:3px;top:0;color:#000080">ОПЛАТА ПО СЧЁТУ 6 ОТ</div><div class="t" style="left:3px;top:13px;color:#000080">08.06.2018 ЗА УСЛУГУ 2,</div></div>
<div style="position:absolute;left:487px;top:451px;width:107px;height:14px;overflow:hidden;"><div class="t" style="left:2px;top:0;color:#000080">ООО "Строй ИКТ"</div></div>
<div class="t" style="right:419px;top:451px;color:#000080">6</div>
<div style="position:absolute;left:653px;top:451px;width:99px;height:14px;overflow:hidden;"><div class="t" style="left:2px;top:0;color:#000080">6143085437</div></div>
<div style="position:absolute;left:753px;top:451px;width:124px;height:14px;overflow:hidden;"><div class="t" style="left:2px;top:0;color:#000080">ООО "Строй ИКТ"</div></div>
<div style="position:absolute;left:880px;top:451px;width:176px;height:14px;overflow:hidden;"><div class="t" style="left:2px;top:0;color:#000080">ООО "Простой софт"</div></div>
<div style="position:absolute;left:31px;top:484px;width:30px;height:32px;background:#f4f4f4"></div>
<div style="position:absolute;left:753px;top:484px;width:303px;height:32px;background:#fefdd0"></div>
<div style="position:absolute;left:31px;top:516px;width:1025px;height:1px;background:#c0c0c0"></div>
<div class="t" style="right:1011px;top:484px;color:#000080">7</div>
<div style="position:absolute;left:62px;top:484px;width:106px;height:14px;overflow:hidden;"><div class="t" style="left:2px;top:0;color:#000080">Уралсиб</div></div>
<div class="t" style="right:823px;top:484px;color:#000080">10.06.2018</div>
<div class="t" style="right:734px;top:484px;color:#000080">30 000,00</div>
<div style="position:absolute;left:339px;top:484px;width:147px;height:30px;overflow:hidden;"><div class="t" style="left:3px;top:0;color:#000080">ОПЛАТА ПО СЧЁТУ 7 ОТ</div><div class="t" style="left:3px;top:13px;color:#000080">09.06.2018 ЗА УСЛУГУ 1,</div></div>
<div style="position:absolute;left:487px;top:484px;width:107px;height:14px;overflow:hidden;"><div class="t" style="left:2px;top:0;color:#000080">ИП Петров Иван Алексеевич</div></div>
<div class="t" style="right:419px;top:484px;color:#000080">7</div>
<div style="position:absolute;left:653px;top:484px;width:99px;height:14px;overflow:hidden;"><div class="t" style="left:2px;top:0;color:#000080">780708389311</div></div>
<div style="position:absolute;left:753px;top:484px;width:124px;height:14px;overflow:hidden;"><div class="t" style="left:2px;top:0;color:#000080">ИП Петров Иван Алексеевич</div></div>
<div style="position:absolute;left:880px;top:484px;width:176px;height:14px;overflow:hidden;"><div class="t" style="left:2px;top:0;color:#000080">ООО "Простой софт"</div></div>
<div style="position:absolute;left:61px;top:286px;width:1px;height:231px;background:#c0c0c0"></div>
<div style="position:absolute;left:170px;top:286px;width:1px;height:231px;background:#c0c0c0"></div>
<div style="position:absolute;left:248px;top:286px;width:1px;height:231px;background:#c0c0c0"></div>
<div style="position:absolute;left:338px;top:286px;width:1px;height:231px;background:#c0c0c0"></div>
<div style="position:absolute;left:486px;top:286px;width:1px;height:231px;background:#c0c0c0"></div>
<div style="position:absolute;left:596px;top:286px;width:1px;height:231px;background:#c0c0c0"></div>
<div style="position:absolute;left:652px;top:286px;width:1px;height:231px;background:#c0c0c0"></div>
<div style="position:absolute;left:752px;top:286px;width:1px;height:231px;background:#c0c0c0"></div>
<div style="position:absolute;left:879px;top:286px;width:1px;height:231px;background:#c0c0c0"></div>
<div style="position:absolute;left:31px;top:286px;width:30px;height:32px;border:1px solid #000"></div>
<svg style="left:19px;top:297px" width="7" height="12" viewBox="0 0 7 12"><path d="M0 0V11.5L6.5 5.75Z" fill="#000"/></svg>
<div style="position:absolute;left:12px;top:606px;width:1044px;height:18px;background:#fff"></div>
<div style="position:absolute;left:30px;top:606px;width:1px;height:18px;background:#ececec"></div>
<svg style="left:16px;top:611px" width="10" height="10" viewBox="0 0 10 10"><path d="M9 2.5V0.8H1L4.8 5L1 9.2H9V7.5" stroke="#000" stroke-width="1.5" fill="none" stroke-linejoin="miter"/></svg>
<div class="t" style="right:733px;top:607px;color:#800000">180 000,00</div>
<div style="position:absolute;left:29px;top:624px;width:168px;height:15px;background:#cdcdcd"></div>
<svg style="left:16px;top:627px" width="9" height="10" viewBox="0 0 9 10"><path d="M6.5 1L2.5 4.5L6.5 8" stroke="#505050" stroke-width="2.2" fill="none"/></svg>
<svg style="left:1043px;top:627px" width="9" height="10" viewBox="0 0 9 10"><path d="M2.5 1L6.5 4.5L2.5 8" stroke="#505050" stroke-width="2.2" fill="none"/></svg>
<div style="position:absolute;left:0px;top:656px;width:531px;height:1px;background:#a0a0a0"></div>
<div style="position:absolute;left:531px;top:656px;width:1px;height:19px;background:#fff"></div>
<div style="position:absolute;left:534px;top:656px;width:22px;height:1px;background:#a0a0a0"></div>
<div style="position:absolute;left:534px;top:656px;width:1px;height:19px;background:#a0a0a0"></div>
<div style="position:absolute;left:556px;top:656px;width:1px;height:19px;background:#fff"></div>
<div style="position:absolute;left:559px;top:656px;width:337px;height:1px;background:#a0a0a0"></div>
<div style="position:absolute;left:559px;top:656px;width:1px;height:19px;background:#a0a0a0"></div>
<div style="position:absolute;left:896px;top:656px;width:1px;height:19px;background:#fff"></div>
<div style="position:absolute;left:898px;top:656px;width:48px;height:1px;background:#a0a0a0"></div>
<div style="position:absolute;left:898px;top:656px;width:1px;height:19px;background:#a0a0a0"></div>
<div style="position:absolute;left:946px;top:656px;width:1px;height:19px;background:#fff"></div>
<div style="position:absolute;left:948px;top:656px;width:34px;height:1px;background:#a0a0a0"></div>
<div style="position:absolute;left:948px;top:656px;width:1px;height:19px;background:#a0a0a0"></div>
<div style="position:absolute;left:982px;top:656px;width:1px;height:19px;background:#fff"></div>
<div style="position:absolute;left:986px;top:656px;width:64px;height:1px;background:#a0a0a0"></div>
<div style="position:absolute;left:986px;top:656px;width:1px;height:19px;background:#a0a0a0"></div>
<div style="position:absolute;left:1050px;top:656px;width:1px;height:19px;background:#fff"></div>
<div class="t" style="left:3px;top:658px;">Готово</div>
<div class="t" style="left:538px;top:658px;">БД:</div>
<div class="t" style="left:563px;top:658px;">E:\My\Простой софт\БД\БД\Учет клиентов\PsBankDocuments.mdb</div>
<div class="t" style="left:903px;top:658px;">1 400 Kb</div>
<div class="t" style="left:952px;top:658px;">admin</div>
<div class="t" style="left:991px;top:658px;">22.06.2018</div>
<svg style="left:1055px;top:663px" width="12" height="12" viewBox="0 0 12 12"><path d="M11.5 1L1 11.5M11.5 5L5 11.5M11.5 9L9 11.5" stroke="#a0a0a0" stroke-width="1.2"/><path d="M11.5 2L2 11.5M11.5 6L6 11.5M11.5 10L10 11.5" stroke="#fff" stroke-width="0.8"/></svg>
</body></html>
